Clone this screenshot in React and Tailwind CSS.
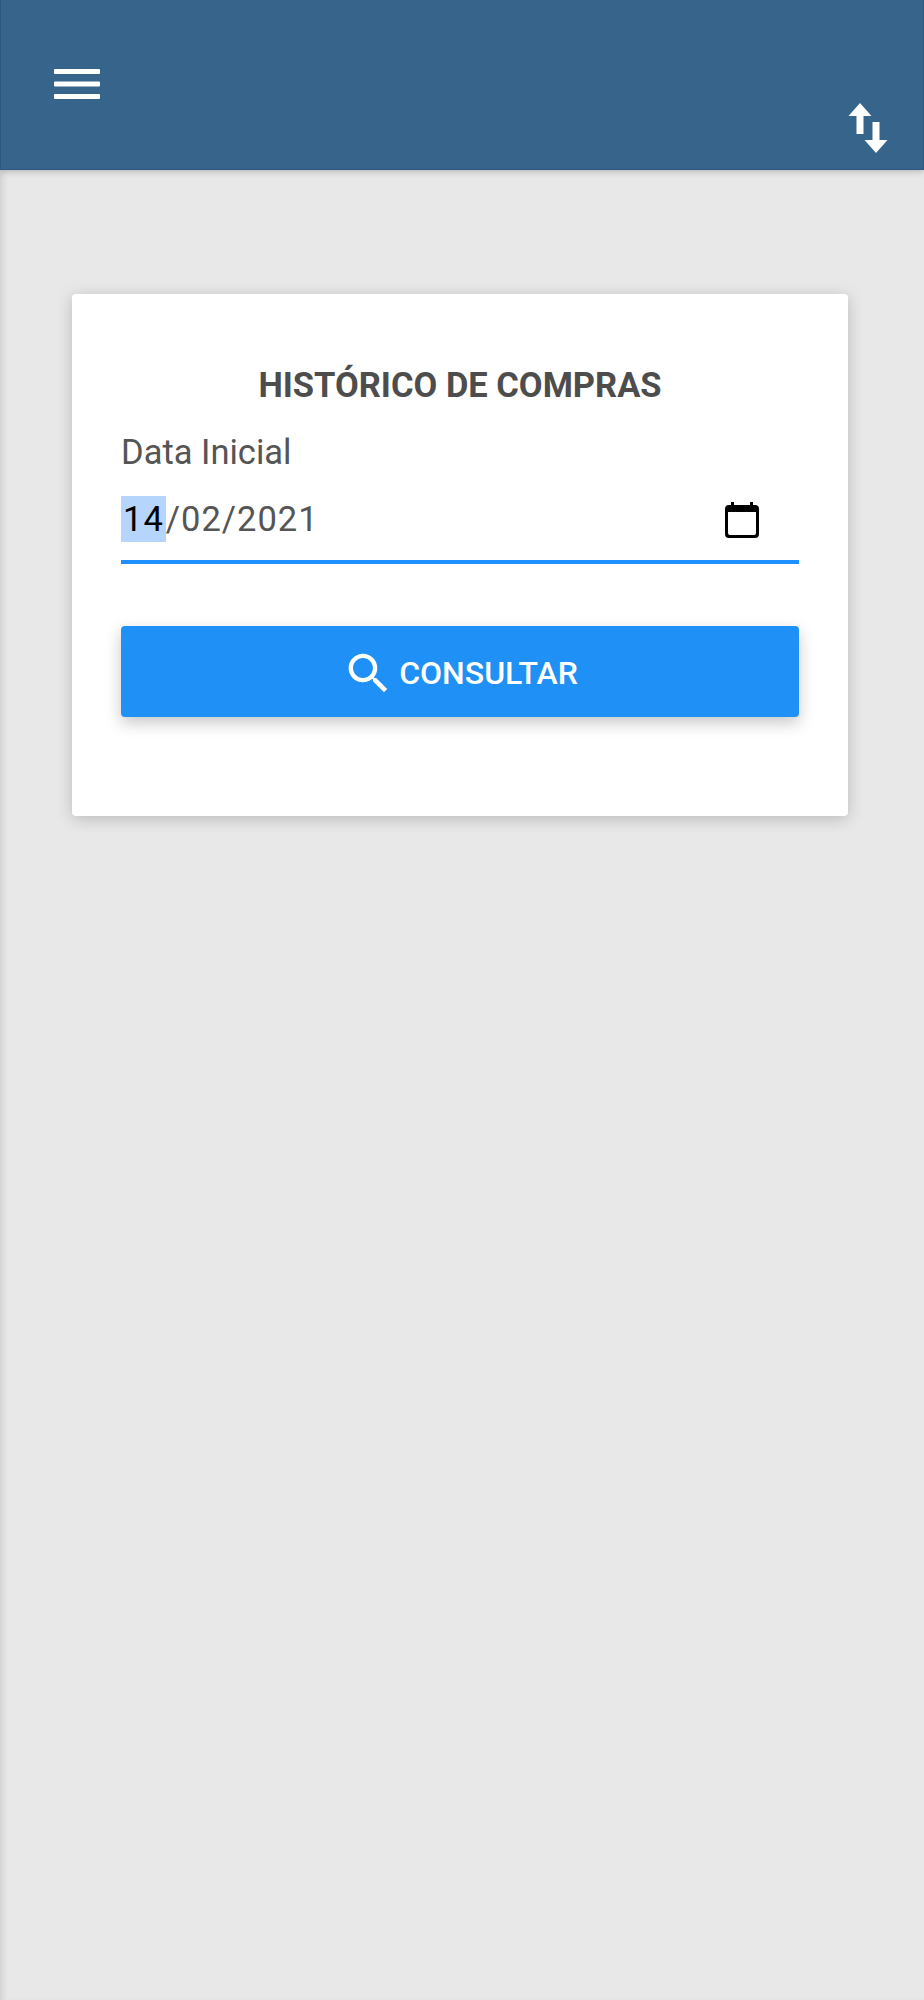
const font = { fontFamily: 'Roboto, sans-serif' };

const MenuIcon = () => (
    <svg width="46" height="32" viewBox="0 0 46 32" className="block">
        <rect x="0" y="0" width="46" height="5" rx="1" fill="#fff" />
        <rect x="0" y="12.5" width="46" height="5" rx="1" fill="#fff" />
        <rect x="0" y="25" width="46" height="5" rx="1" fill="#fff" />
    </svg>
);

const SwapIcon = () => (
    <svg width="40" height="50" viewBox="0 0 40 50" className="block">
        <path d="M12 0 L23.5 13 H15.5 V31 H8.5 V13 H0.5 Z" fill="#fff" />
        <path d="M28 50 L16.5 37 H24.5 V19 H31.5 V37 H39.5 Z" fill="#fff" />
    </svg>
);

const CalendarIcon = () => (
    <svg width="34" height="36" viewBox="0 0 34 36" className="block">
        <path d="M6 0h3v3h16V0h3v3h2a4 4 0 0 1 4 4v25a4 4 0 0 1-4 4H4a4 4 0 0 1-4-4V7a4 4 0 0 1 4-4h2z M3 10v21a2 2 0 0 0 2 2h24a2 2 0 0 0 2-2V10z" fill="#000" fillRule="evenodd" />
    </svg>
);

const SearchIcon = () => (
    <svg width="53" height="53" viewBox="0 0 24 24" fill="#fff" className="block">
        <path d="M15.5 14h-.79l-.28-.27C15.41 12.59 16 11.11 16 9.5 16 5.91 13.09 3 9.5 3S3 5.91 3 9.5 5.91 16 9.5 16c1.61 0 3.09-.59 4.23-1.57l.27.28v.79l5 4.99L20.49 19l-4.99-5zm-6 0C7.01 14 5 11.99 5 9.5S7.01 5 9.5 5 14 7.01 14 9.5 11.99 14 9.5 14z" />
    </svg>
);

export default function App() {
    return (
        <div style={font} className="min-h-[2000px] bg-[#e8e8e8] shadow-[inset_7px_0_6px_-4px_rgba(0,0,0,0.1)]">
            <header className="h-[170px] bg-[#36648b] border-l border-r border-b border-[#2c5880] shadow-[0_2px_6px_rgba(0,0,0,0.2)] flex justify-between pl-[53px] pr-[35px]">
                <div className="pt-[69px]"><MenuIcon /></div>
                <div className="pt-[103px]"><SwapIcon /></div>
            </header>

            <main className="pl-[72px] pt-[124px]">
                <section className="w-[776px] h-[522px] bg-white rounded-[4px] shadow-[0_3px_16px_rgba(0,0,0,0.2)] pl-[49px] pr-[49px] pt-[71px]">
                    <h1 className="text-center text-[34.5px] leading-[40px] font-bold text-[#4d4d4d]">HISTÓRICO DE COMPRAS</h1>

                    <label className="block mt-[25px] mb-[22px] text-[34.5px] leading-[44px] text-[#555]">Data Inicial</label>
                    <div className="h-[68px] border-b-[4px] border-[#1e90ff] flex justify-between pr-[40px]">
                        <div className="text-[34.5px] leading-[46px] tracking-[1px] text-[#555] flex h-[46px]">
                            <span className="bg-[#b5d5fd] text-black px-[2px]">14</span>
                            <span>/02/2021</span>
                        </div>
                        <div className="pt-[6px]"><CalendarIcon /></div>
                    </div>

                    <button className="mt-[62px] w-full h-[91px] pt-[3px] bg-[#1f90f5] rounded-[4px] shadow-[0_6px_16px_rgba(0,0,0,0.22)] flex items-center justify-center gap-[4px] text-white text-[32px] font-medium">
                        <SearchIcon />
                        <span>CONSULTAR</span>
                    </button>
                </section>
            </main>
        </div>
    );
}
